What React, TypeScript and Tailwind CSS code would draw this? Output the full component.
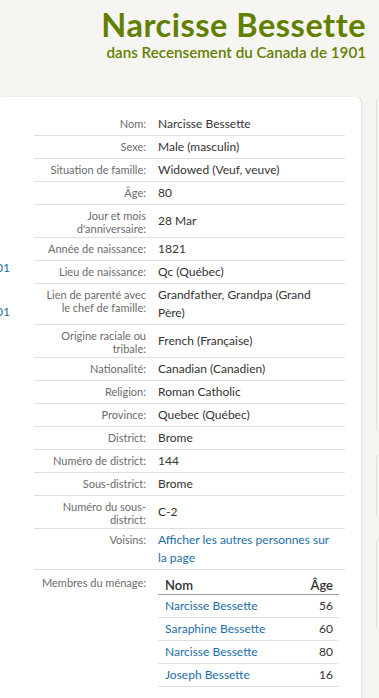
import React from "react";

type Row = { label: string[]; value: string[]; link?: boolean };

const rows: Row[] = [
  { label: ["Nom:"], value: ["Narcisse Bessette"] },
  { label: ["Sexe:"], value: ["Male (masculin)"] },
  { label: ["Situation de famille:"], value: ["Widowed (Veuf, veuve)"] },
  { label: ["Âge:"], value: ["80"] },
  { label: ["Jour et mois", "d'anniversaire:"], value: ["28 Mar"] },
  { label: ["Année de naissance:"], value: ["1821"] },
  { label: ["Lieu de naissance:"], value: ["Qc (Québec)"] },
  { label: ["Lien de parenté avec", "le chef de famille:"], value: ["Grandfather, Grandpa (Grand", "Père)"] },
  { label: ["Origine raciale ou", "tribale:"], value: ["French (Française)"] },
  { label: ["Nationalité:"], value: ["Canadian (Canadien)"] },
  { label: ["Religion:"], value: ["Roman Catholic"] },
  { label: ["Province:"], value: ["Quebec (Québec)"] },
  { label: ["District:"], value: ["Brome"] },
  { label: ["Numéro de district:"], value: ["144"] },
  { label: ["Sous-district:"], value: ["Brome"] },
  { label: ["Numéro du sous-", "district:"], value: ["C-2"] },
  { label: ["Voisins:"], value: ["Afficher les autres personnes sur", "la page"], link: true },
];

const members = [
  ["Narcisse Bessette", "56"],
  ["Saraphine Bessette", "60"],
  ["Narcisse Bessette", "80"],
  ["Joseph Bessette", "16"],
];

export default function App() {
  return (
    <div className="w-[379px] h-[698px] overflow-hidden bg-[#f6f5f2] font-['Lato','Noto_Sans',sans-serif]">
      <div className="pt-[7px] pr-[13px] text-right text-[#628000] whitespace-nowrap">
        <h1 className="text-[32.5px] font-bold leading-[36px] tracking-[0.5px]">Narcisse Bessette</h1>
        <p className="text-[15.2px] font-semibold leading-[18px]">dans Recensement du Canada de 1901</p>
      </div>
      <div className="flex items-start mt-[36px]">
        <div className="w-[361px] shrink-0 bg-white rounded-tr-[6px] shadow-[1px_0_2px_rgba(0,0,0,0.10)] flex h-[620px]">
          <div className="w-[10px] shrink-0 overflow-hidden pt-[162px] flex flex-col gap-[26px] text-[12px] leading-[18px] text-[#1b6ea8]">
            <div className="flex justify-end whitespace-nowrap">1901</div>
            <div className="flex justify-end whitespace-nowrap">1901</div>
          </div>
          <div className="ml-[24px] w-[311px] pt-[16px]">
            {rows.map((r, i) => (
              <div key={i} className="flex items-center border-b border-[#e0ded8]">
                <div className="self-start w-[116px] shrink-0 pr-[4px] pt-[4px] pb-[2px] text-right text-[11px] leading-[13px] text-[#6b6b6b]">
                  {r.label.map((l, j) => (
                    <div key={j}>{l}</div>
                  ))}
                </div>
                <div className={`pl-[8px] py-[2px] text-[12px] leading-[18px] ${r.link ? "text-[#1b6ea8]" : "text-[#333333]"}`}>
                  {r.value.map((v, j) => (
                    <div key={j}>{v}</div>
                  ))}
                </div>
              </div>
            ))}
            <div className="flex items-start">
              <div className="w-[116px] shrink-0 pr-[4px] pt-[6px] text-right text-[11px] leading-[13px] text-[#6b6b6b]">
                Membres du ménage:
              </div>
              <div className="ml-[8px] w-[181px] mt-[6px]">
                <div className="flex justify-between pl-[7px] pr-[6px] text-[13px] leading-[18px] font-semibold text-[#333333] border-b border-[#9a9a9a]">
                  <span>Nom</span>
                  <span>Âge</span>
                </div>
                {members.map((m, i) => (
                  <div key={i} className="flex justify-between pl-[7px] pr-[6px] py-[2px] text-[12px] leading-[18px] border-b border-[#e0ded8]">
                    <span className="text-[#1b6ea8]">{m[0]}</span>
                    <span className="text-[#333333]">{m[1]}</span>
                  </div>
                ))}
              </div>
            </div>
          </div>
        </div>
        <div className="ml-[15px] flex flex-col">
          <div className="w-[60px] h-[336px] bg-[#f6f5f2] border border-[#e2e0db] rounded-[5px]"></div>
          <div className="mt-[21px] w-[60px] h-[66px] bg-[#f6f5f2] border border-[#e2e0db] rounded-[5px]"></div>
          <div className="mt-[18px] w-[60px] h-[94px] bg-[#f6f5f2] border border-[#e2e0db] rounded-[5px]"></div>
        </div>
      </div>
    </div>
  );
}
